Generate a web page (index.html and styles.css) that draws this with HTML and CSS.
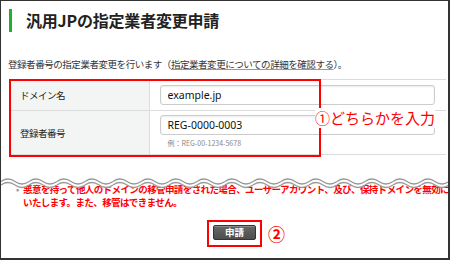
FILE: index.html
```html
<!DOCTYPE html>
<html lang="ja">
<head>
    <meta charset="UTF-8">
    <meta name="viewport" content="width=device-width, initial-scale=1.0">
    <title>汎用JPの指定業者変更申請</title>
    <link rel="stylesheet" href="styles.css">
</head>
<body>
    <div class="frame">
        <h1 class="page-title">汎用JPの指定業者変更申請</h1>

        <p class="intro">登録者番号の指定業者変更を行います（<a href="#">指定業者変更についての詳細を確認する</a>）。</p>

        <div class="entry">
            <table class="entry-table">
                <tr class="row-domain">
                    <th>ドメイン名</th>
                    <td><input type="text" class="field" value="example.jp"></td>
                </tr>
                <tr class="row-reg">
                    <th>登録者番号</th>
                    <td>
                        <input type="text" class="field" value="REG-0000-0003">
                        <div class="hint">例：REG-00-1234-5678</div>
                    </td>
                </tr>
            </table>
            <div class="mark-box"></div>
            <div class="mark-note">①どちらかを入力</div>
        </div>

        <div class="warning">
            <svg class="tear" width="448" height="16" viewBox="0 0 448 16">
                <defs>
                    <pattern id="wave" width="28" height="16" patternUnits="userSpaceOnUse">
                        <path d="M0,0 H28 V11 Q21,15.5 14,11 Q7,6.5 0,11 Z" fill="#fff"/>
                        <path d="M0,7.5 Q7,2.5 14,7.5 T28,7.5" fill="none" stroke="#999" stroke-width="1.3"/>
                        <path d="M0,11 Q7,6 14,11 T28,11" fill="none" stroke="#999" stroke-width="1.3"/>
                    </pattern>
                </defs>
                <rect width="448" height="16" fill="url(#wave)"/>
            </svg>
            <p class="warning-text"><span class="dot">•</span>悪意を持って他人のドメインの移管申請をされた場合、ユーザーアカウント、及び、保持ドメインを無効に<br>いたします。また、移管はできません。</p>
        </div>

        <div class="submit-row">
            <div class="submit-box">
                <button type="button" class="submit-btn">申請</button>
            </div>
            <span class="submit-note">②</span>
        </div>
    </div>
</body>
</html>
```

FILE: styles.css
```css
/* Base */
body {
    margin: 0;
    padding: 0;
    background: #fff;
    font-family: "Noto Sans CJK JP", sans-serif;
    color: #333;
}

.frame {
    box-sizing: border-box;
    width: 450px;
    height: 260px;
    border-top: 1px solid #333;
    border-left: 1px solid #333;
    border-right: 2px solid #333;
    border-bottom: 2px solid #333;
    overflow: hidden;
}

/* Title */
.page-title {
    margin: 8px 0 0 8px;
    padding-left: 14px;
    border-left: 3px solid #22b02c;
    font-size: 16px;
    line-height: 23px;
    font-weight: bold;
    color: #222;
    letter-spacing: -0.2px;
}

.intro {
    margin: 25px 0 0 7px;
    font-size: 9.5px;
    line-height: 14px;
    letter-spacing: -0.45px;
}

.intro a {
    color: #333;
    text-decoration: underline;
    text-decoration-color: #999;
}

/* Entry table */
.entry {
    position: relative;
    margin: 8px 2px 0 8px;
}

.entry-table {
    width: 435px;
    margin: 0 0 0 2px;
    padding-top: 2px;
    border-collapse: collapse;
}

.entry-table tr {
    border-top: 1px solid #dcdcdc;
    border-bottom: 1px solid #dcdcdc;
}

.entry-table th {
    box-sizing: border-box;
    width: 138px;
    padding: 0 0 0 9px;
    background: #f3f5f4;
    border-right: 1px solid #dcdcdc;
    text-align: left;
    font-size: 9.5px;
    font-weight: normal;
    letter-spacing: -0.5px;
    color: #222;
}

.entry-table td {
    padding: 5px 11px 5px 10px;
}

.row-domain td {
    height: 20px;
}

.row-reg td {
    padding-top: 4px;
    padding-bottom: 5px;
}

.field {
    box-sizing: border-box;
    display: block;
    width: 100%;
    height: 20px;
    padding: 0 7px;
    border: 1px solid #ccc;
    border-radius: 3px;
    box-shadow: inset 0 1px 2px rgba(0, 0, 0, 0.08);
    font-family: "Noto Sans", "Noto Sans CJK JP", sans-serif;
    font-size: 10.5px;
    color: #111;
}

.hint {
    margin-top: 3px;
    padding-left: 8px;
    font-size: 7px;
    line-height: 11px;
    color: #888;
}

.mark-box {
    position: absolute;
    left: 0;
    top: 0;
    box-sizing: border-box;
    width: 312px;
    height: 78px;
    border: 2px solid #f00;
}

.mark-note {
    position: absolute;
    left: 306px;
    top: 29px;
    padding: 1px 0;
    background: #fff;
    font-size: 15px;
    line-height: 18px;
    color: #f00;
}

/* Warning with torn edge */
.warning {
    position: relative;
    margin-top: 28px;
}

.tear {
    position: absolute;
    left: 0;
    top: -9px;
    display: block;
}

.warning-text {
    margin: 0;
    padding-left: 22px;
    font-size: 9.5px;
    line-height: 13px;
    font-weight: bold;
    letter-spacing: -0.6px;
    color: #f00;
    white-space: nowrap;
}

.dot {
    display: inline-block;
    width: 0;
    margin-left: -7px;
    margin-right: 7px;
    color: #999;
    font-weight: normal;
}

/* Submit */
.submit-row {
    display: flex;
    align-items: center;
    margin-top: 11px;
    padding-left: 206px;
}

.submit-box {
    padding: 3px 4px 5px 4px;
    border: 2px solid #f00;
}

.submit-btn {
    display: block;
    width: 43px;
    height: 15px;
    padding: 0;
    border: 1px solid #333;
    border-radius: 2px;
    background: linear-gradient(#666, #4e4e4e);
    box-shadow: inset 0 1px 0 rgba(255, 255, 255, 0.25);
    color: #fff;
    font-family: "Noto Sans CJK JP", sans-serif;
    font-size: 9.5px;
    font-weight: bold;
    line-height: 13px;
    cursor: pointer;
}

.submit-note {
    margin-left: 6px;
    font-size: 17px;
    line-height: 18px;
    font-weight: bold;
    color: #f00;
}
```
